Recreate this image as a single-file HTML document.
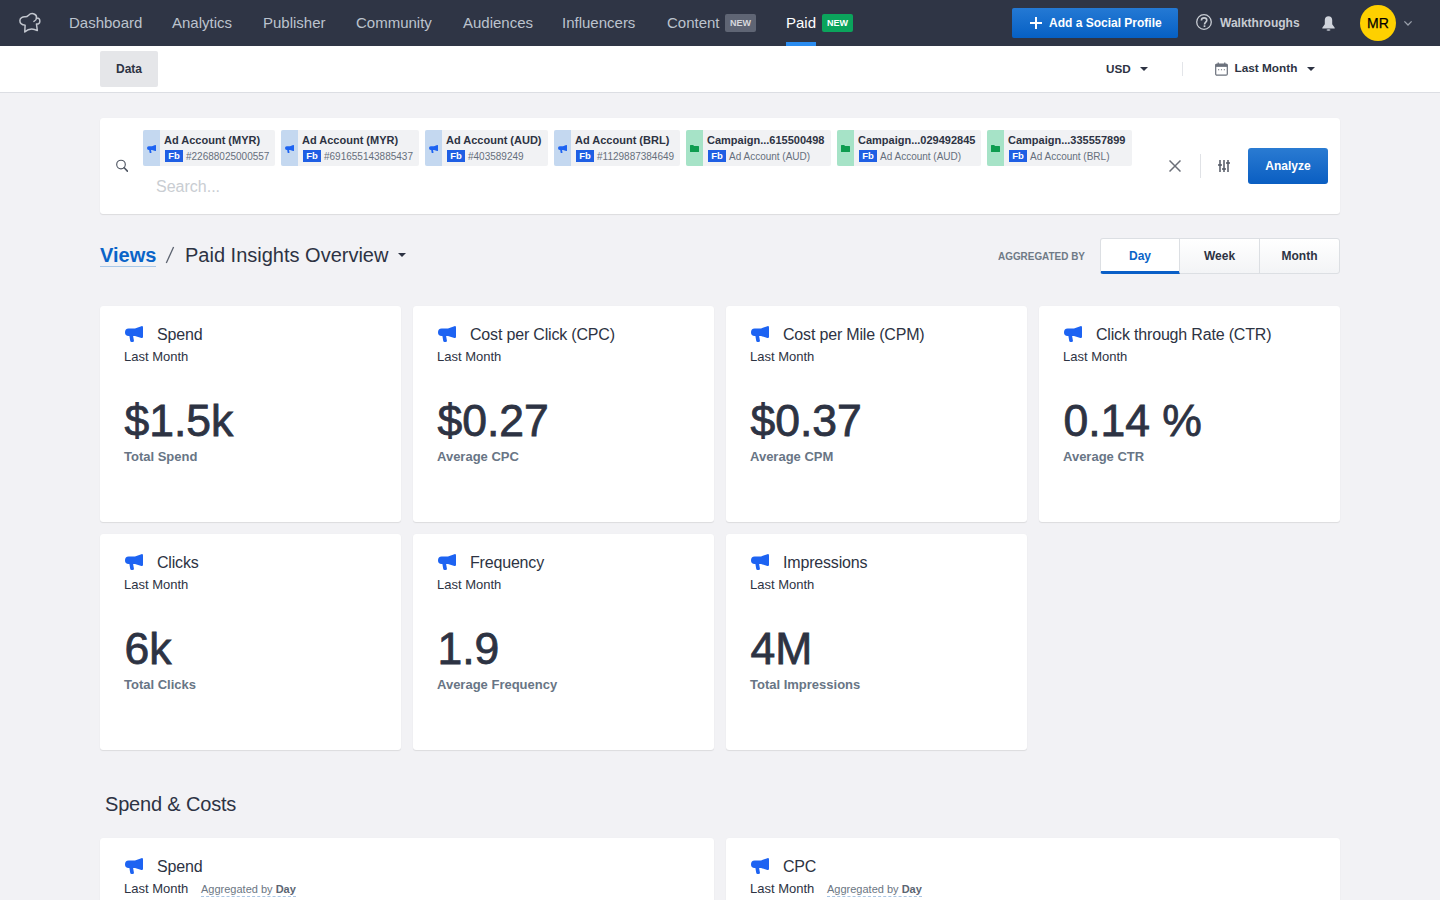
<!DOCTYPE html>
<html><head><meta charset="utf-8">
<style>
*{box-sizing:border-box;margin:0;padding:0}
html,body{-webkit-font-smoothing:antialiased;width:1440px;height:900px;overflow:hidden;background:#f2f2f5;font-family:"Liberation Sans",sans-serif;color:#2d3343}
.abs{position:absolute}
.lh1{line-height:1;white-space:nowrap}
#nav{position:absolute;left:0;top:0;width:1440px;height:46px;background:#2f3545}
.ni{position:absolute;top:0;height:46px;line-height:46px;font-size:15px;color:#bcc3ce;white-space:nowrap}
.badge{position:absolute;height:18px;line-height:19px;font-size:9px;font-weight:bold;color:#fff;text-align:center;border-radius:2px}
#sub{position:absolute;left:0;top:46px;width:1440px;height:47px;background:#fff;border-bottom:1px solid #dcdee3}
.card{position:absolute;background:#fff;border-radius:3px;box-shadow:0 1px 1px rgba(0,0,0,.09),0 0 1px rgba(0,0,0,.05)}
.chip{position:absolute;top:12px;height:36px;background:#f1f2f4;border-radius:2px;overflow:hidden}
.chip .strip{position:absolute;left:0;top:0;width:17px;height:36px}
.chip .t{position:absolute;left:21px;top:5px;font-size:11px;line-height:1;font-weight:bold;color:#2d3343;white-space:nowrap}
.chip .fb{position:absolute;left:22px;top:20px;width:18px;height:12px;background:#1f5fe4;color:#fff;font-size:9.5px;font-weight:bold;text-align:center;line-height:12px}
.chip .s{position:absolute;left:43px;top:22.3px;font-size:10px;color:#666f7c;white-space:nowrap;line-height:1}
.kpi .tt{position:absolute;left:57px;top:21.2px;font-size:16px;letter-spacing:-0.18px;line-height:1;color:#2d3343;white-space:nowrap}
.kpi .lm{position:absolute;left:24px;top:44px;font-size:13px;line-height:1;color:#2d3343;white-space:nowrap}
.kpi .v{position:absolute;left:24.4px;top:93.2px;font-size:44.5px;line-height:1;color:#2d3343;-webkit-text-stroke:0.8px #2d3343;white-space:nowrap}
.kpi .lab{position:absolute;left:24px;top:143.8px;font-size:13px;line-height:1;font-weight:bold;color:#687585;white-space:nowrap}
.kpi .agg{position:absolute;left:101px;top:46px;font-size:11px;line-height:1;color:#6b7683;white-space:nowrap;padding-bottom:1px;border-bottom:1px dashed #a9c5e3}
.kpi .agg b{color:#5b6572}
.caret{position:absolute;width:0;height:0;border-left:4px solid transparent;border-right:4px solid transparent;border-top:4.5px solid #2d3343}
.seg{position:absolute;top:238px;height:36px;border:1px solid #dcdfe3;background:linear-gradient(#ffffff,#f3f4f6);font-size:12px;font-weight:bold;text-align:center;line-height:34px;color:#2d3343}
</style></head><body>
<div id="nav">
  <svg class="abs" style="left:14px;top:8px" width="32" height="30" viewBox="-1.4 -1.3 34.8 32.6" fill="none" stroke="#c3c7cf" stroke-width="1.6" stroke-linecap="round" stroke-linejoin="round"><path d="M10.7 17.3 C7 17 5 15 5 12.5 C5 9.5 8 8 11 8.3 C12.5 8.3 13.5 7.5 14.5 6.5 C16 5 19 4.5 21 5.5 C22.5 6.3 23.3 8 23 9.5 C25.5 9.3 27 11 26.7 13.5 C26.5 15.5 25 16.3 23 16 L24 23.3 C20 21 15 20.5 10.3 24.7 Z"/><path d="M23 9.5 C23 11 22 12.5 20.3 13.3"/></svg>
  <div class="ni" style="left:69px">Dashboard</div>
  <div class="ni" style="left:172px">Analytics</div>
  <div class="ni" style="left:263px">Publisher</div>
  <div class="ni" style="left:356px">Community</div>
  <div class="ni" style="left:463px">Audiences</div>
  <div class="ni" style="left:562px">Influencers</div>
  <div class="ni" style="left:667px">Content</div>
  <div class="badge" style="left:725px;top:14px;width:31px;background:#5f6574;color:#d6d8dd">NEW</div>
  <div class="ni" style="left:786px;color:#fff">Paid</div>
  <div class="abs" style="left:786px;top:42px;width:30px;height:4px;background:#2a8cf0"></div>
  <div class="badge" style="left:822px;top:14px;width:31px;background:#0ba45c">NEW</div>
  <div class="abs" style="left:1012px;top:8px;width:166px;height:30px;background:linear-gradient(#2479d4,#0660c4);border-radius:2px;color:#fff;font-size:12px;font-weight:bold;line-height:30px;padding-left:37px;white-space:nowrap">Add a Social Profile</div>
  <svg class="abs" style="left:1030px;top:17px" width="12" height="12" viewBox="0 0 12 12" stroke="#fff" stroke-width="2"><path d="M6 0 V12 M0 6 H12"/></svg>
  <svg class="abs" style="left:1196px;top:13.8px" width="16" height="16" viewBox="0 0 16 16" fill="none" stroke="#c8ccd3" stroke-width="1.3"><circle cx="8" cy="8" r="7.3"/><path d="M5.4 6.4 C5.4 4.7 6.6 3.9 8.1 3.9 C9.8 3.9 10.8 5 10.8 6.2 C10.8 8 8.5 8.2 8.5 10.4" stroke-width="1.6"/><rect x="7.65" y="11.3" width="1.7" height="1.7" fill="#c8ccd3" stroke="none"/></svg>
  <div class="ni" style="left:1220px;font-size:12px;font-weight:bold;color:#c8ccd3">Walkthroughs</div>
  <svg class="abs" style="left:1321.5px;top:15.5px" width="13" height="15" viewBox="0 0 13 15" fill="#d0d4dc"><path d="M6.5 0.3 C4.2 0.3 2.8 1.7 2.8 4 L2.8 8.3 L0.3 11.8 L0.3 12.5 L12.7 12.5 L12.7 11.8 L10.2 8.3 L10.2 4 C10.2 1.7 8.8 0.3 6.5 0.3 Z"/><ellipse cx="6.5" cy="14" rx="2" ry="0.8"/></svg>
  <div class="abs" style="left:1360px;top:5px;width:36px;height:36px;border-radius:50%;background:#fed000;color:#000;-webkit-text-stroke:0.25px #000;font-size:14px;line-height:36px;text-align:center">MR</div>
  <svg class="abs" style="left:1403px;top:20px" width="10" height="7" viewBox="0 0 10 7" fill="none" stroke="#9aa0ab" stroke-width="1.3"><path d="M1.4 1.4 L5 5 L8.6 1.4"/></svg>
</div>
<div id="sub">
  <div class="abs" style="left:100px;top:5px;width:58px;height:36px;background:#e5e6e9;border-radius:2px;font-size:12px;font-weight:bold;line-height:37px;text-align:center;color:#2d3343">Data</div>
  <div class="abs lh1" style="left:1106px;top:17.3px;font-size:11.7px;font-weight:bold">USD</div>
  <div class="caret" style="left:1140px;top:20.5px"></div>
  <div class="abs" style="left:1182px;top:16px;width:1px;height:14px;background:#e3e5e9"></div>
  <svg class="abs" style="left:1215px;top:16px" width="13" height="14" viewBox="0 0 14 15" fill="none"><rect x="0.75" y="2.2" width="12.5" height="12" rx="1.3" stroke="#6b717c" stroke-width="1.3"/><rect x="0.75" y="2.2" width="12.5" height="3" fill="#6b717c"/><path d="M3.5 0.5 V3 M10.5 0.5 V3" stroke="#6b717c" stroke-width="1.3"/><path d="M3.3 8.3 h1.2 M6.4 8.3 h1.2 M9.5 8.3 h1.2" stroke="#6b717c" stroke-width="1.2"/></svg>
  <div class="abs lh1" style="left:1234.5px;top:17.3px;font-size:11.8px;font-weight:bold">Last Month</div>
  <div class="caret" style="left:1307px;top:20.5px"></div>
</div>
<div class="card" style="left:100px;top:118px;width:1240px;height:96px;border-radius:3px">
  <svg class="abs" style="left:15px;top:41px" width="13" height="13" viewBox="0 0 13 13" fill="none" stroke="#4f5663"><circle cx="6" cy="5.5" r="4.3" stroke-width="1.15"/><path d="M9.2 8.7 L12.4 12.1" stroke-width="1.6" stroke-linecap="round"/></svg>
<div class="chip" style="left:43px;width:132px"><div class="strip" style="background:#c4d8f0"></div><svg class="abs" style="left:4px;top:14.6px" width="9" height="8" viewBox="0 0 18 16" fill="#1d63f2"><path d="M3.6 2.4 L10 2.4 L16.4 0.2 Q18 -0.2 18 1.4 L18 10.8 Q18 12.4 16.4 12 L10 10 L8.1 10 L8.9 14.6 Q9.1 16 7.6 16 L6.6 16 Q5.4 16 5.2 14.8 L4.4 10 L3.6 10 Q0 10 0 6.2 Q0 2.4 3.6 2.4 Z"/></svg><div class="t">Ad Account (MYR)</div><div class="fb">Fb</div><div class="s">#22688025000557</div></div>
<div class="chip" style="left:181px;width:138px"><div class="strip" style="background:#c4d8f0"></div><svg class="abs" style="left:4px;top:14.6px" width="9" height="8" viewBox="0 0 18 16" fill="#1d63f2"><path d="M3.6 2.4 L10 2.4 L16.4 0.2 Q18 -0.2 18 1.4 L18 10.8 Q18 12.4 16.4 12 L10 10 L8.1 10 L8.9 14.6 Q9.1 16 7.6 16 L6.6 16 Q5.4 16 5.2 14.8 L4.4 10 L3.6 10 Q0 10 0 6.2 Q0 2.4 3.6 2.4 Z"/></svg><div class="t">Ad Account (MYR)</div><div class="fb">Fb</div><div class="s">#691655143885437</div></div>
<div class="chip" style="left:325px;width:123px"><div class="strip" style="background:#c4d8f0"></div><svg class="abs" style="left:4px;top:14.6px" width="9" height="8" viewBox="0 0 18 16" fill="#1d63f2"><path d="M3.6 2.4 L10 2.4 L16.4 0.2 Q18 -0.2 18 1.4 L18 10.8 Q18 12.4 16.4 12 L10 10 L8.1 10 L8.9 14.6 Q9.1 16 7.6 16 L6.6 16 Q5.4 16 5.2 14.8 L4.4 10 L3.6 10 Q0 10 0 6.2 Q0 2.4 3.6 2.4 Z"/></svg><div class="t">Ad Account (AUD)</div><div class="fb">Fb</div><div class="s">#403589249</div></div>
<div class="chip" style="left:454px;width:126px"><div class="strip" style="background:#c4d8f0"></div><svg class="abs" style="left:4px;top:14.6px" width="9" height="8" viewBox="0 0 18 16" fill="#1d63f2"><path d="M3.6 2.4 L10 2.4 L16.4 0.2 Q18 -0.2 18 1.4 L18 10.8 Q18 12.4 16.4 12 L10 10 L8.1 10 L8.9 14.6 Q9.1 16 7.6 16 L6.6 16 Q5.4 16 5.2 14.8 L4.4 10 L3.6 10 Q0 10 0 6.2 Q0 2.4 3.6 2.4 Z"/></svg><div class="t">Ad Account (BRL)</div><div class="fb">Fb</div><div class="s">#1129887384649</div></div>
<div class="chip" style="left:586px;width:145px"><div class="strip" style="background:#a6e3c7"></div><svg class="abs" style="left:4px;top:15px" width="9" height="7" viewBox="0 0 9 7"><path d="M0 0.6 Q0 0 0.6 0 L3.2 0 L4 1 L8.4 1 Q9 1 9 1.6 L9 6.4 Q9 7 8.4 7 L0.6 7 Q0 7 0 6.4 Z" fill="#0e9c50"/></svg><div class="t">Campaign...615500498</div><div class="fb">Fb</div><div class="s">Ad Account (AUD)</div></div>
<div class="chip" style="left:737px;width:144px"><div class="strip" style="background:#a6e3c7"></div><svg class="abs" style="left:4px;top:15px" width="9" height="7" viewBox="0 0 9 7"><path d="M0 0.6 Q0 0 0.6 0 L3.2 0 L4 1 L8.4 1 Q9 1 9 1.6 L9 6.4 Q9 7 8.4 7 L0.6 7 Q0 7 0 6.4 Z" fill="#0e9c50"/></svg><div class="t">Campaign...029492845</div><div class="fb">Fb</div><div class="s">Ad Account (AUD)</div></div>
<div class="chip" style="left:887px;width:145px"><div class="strip" style="background:#a6e3c7"></div><svg class="abs" style="left:4px;top:15px" width="9" height="7" viewBox="0 0 9 7"><path d="M0 0.6 Q0 0 0.6 0 L3.2 0 L4 1 L8.4 1 Q9 1 9 1.6 L9 6.4 Q9 7 8.4 7 L0.6 7 Q0 7 0 6.4 Z" fill="#0e9c50"/></svg><div class="t">Campaign...335557899</div><div class="fb">Fb</div><div class="s">Ad Account (BRL)</div></div>

  <div class="abs lh1" style="left:56px;top:60.8px;font-size:16px;color:#c9cdd2">Search...</div>
  <svg class="abs" style="left:1069px;top:42px" width="12" height="12" viewBox="0 0 12 12" stroke="#6b6f78" stroke-width="1.5"><path d="M0.5 0.5 L11.5 11.5 M11.5 0.5 L0.5 11.5"/></svg>
  <div class="abs" style="left:1100px;top:36px;width:1px;height:24px;background:#e0e2e6"></div>
  <svg class="abs" style="left:1118px;top:42px" width="12" height="12" viewBox="0 0 12 12" stroke="#5c626d" stroke-width="1.6"><path d="M2 0 V12 M6 0 V12 M10 0 V12"/><path d="M0.2 5 H3.8 M4.2 9 H7.8 M8.2 3 H11.8" stroke-width="2.2"/></svg>
  <div class="abs" style="left:1148px;top:30px;width:80px;height:36px;background:linear-gradient(#2a7bd2,#0a5ec2);border-radius:3px;color:#fff;font-size:12px;font-weight:bold;line-height:36px;text-align:center">Analyze</div>
</div>
<div class="abs lh1" style="left:100px;top:245px;font-size:20px;font-weight:bold;color:#0a64c8">Views</div>
<div class="abs" style="left:100px;top:266px;width:56px;height:1px;background:#a9c8e8"></div>
<svg class="abs" style="left:165px;top:246px" width="10" height="18" viewBox="0 0 10 18"><path d="M8.6 1 L1.3 17" stroke="#5c6370" stroke-width="1.3"/></svg>
<div class="abs lh1" style="left:185px;top:245px;font-size:20px;color:#2d3343">Paid Insights Overview</div>
<div class="caret" style="left:398px;top:253px;border-top-color:#2d3343"></div>
<div class="abs lh1" style="left:998px;top:252.2px;font-size:10.4px;font-weight:bold;color:#6f7a86;transform:scaleX(.955);transform-origin:0 0">AGGREGATED BY</div>
<div class="seg" style="left:1179px;width:81px;">Week</div>
<div class="seg" style="left:1259px;width:81px;border-radius:0 3px 3px 0">Month</div>
<div class="seg" style="left:1100px;width:80px;background:#fff;color:#0a64c8;border-radius:3px 0 0 3px;border-bottom:3px solid #0a5fc7;line-height:34px">Day</div>
<div class="card kpi" style="left:100px;top:306px;width:301px;height:216px"><svg class="abs" style="left:25px;top:20px" width="18" height="16" viewBox="0 0 18 16" fill="#1d63f2"><path d="M3.6 2.4 L10 2.4 L16.4 0.2 Q18 -0.2 18 1.4 L18 10.8 Q18 12.4 16.4 12 L10 10 L8.1 10 L8.9 14.6 Q9.1 16 7.6 16 L6.6 16 Q5.4 16 5.2 14.8 L4.4 10 L3.6 10 Q0 10 0 6.2 Q0 2.4 3.6 2.4 Z"/></svg><div class="tt">Spend</div><div class="lm">Last Month</div><div class="v">$1.5k</div><div class="lab">Total Spend</div></div>
<div class="card kpi" style="left:413px;top:306px;width:301px;height:216px"><svg class="abs" style="left:25px;top:20px" width="18" height="16" viewBox="0 0 18 16" fill="#1d63f2"><path d="M3.6 2.4 L10 2.4 L16.4 0.2 Q18 -0.2 18 1.4 L18 10.8 Q18 12.4 16.4 12 L10 10 L8.1 10 L8.9 14.6 Q9.1 16 7.6 16 L6.6 16 Q5.4 16 5.2 14.8 L4.4 10 L3.6 10 Q0 10 0 6.2 Q0 2.4 3.6 2.4 Z"/></svg><div class="tt">Cost per Click (CPC)</div><div class="lm">Last Month</div><div class="v">$0.27</div><div class="lab">Average CPC</div></div>
<div class="card kpi" style="left:726px;top:306px;width:301px;height:216px"><svg class="abs" style="left:25px;top:20px" width="18" height="16" viewBox="0 0 18 16" fill="#1d63f2"><path d="M3.6 2.4 L10 2.4 L16.4 0.2 Q18 -0.2 18 1.4 L18 10.8 Q18 12.4 16.4 12 L10 10 L8.1 10 L8.9 14.6 Q9.1 16 7.6 16 L6.6 16 Q5.4 16 5.2 14.8 L4.4 10 L3.6 10 Q0 10 0 6.2 Q0 2.4 3.6 2.4 Z"/></svg><div class="tt">Cost per Mile (CPM)</div><div class="lm">Last Month</div><div class="v">$0.37</div><div class="lab">Average CPM</div></div>
<div class="card kpi" style="left:1039px;top:306px;width:301px;height:216px"><svg class="abs" style="left:25px;top:20px" width="18" height="16" viewBox="0 0 18 16" fill="#1d63f2"><path d="M3.6 2.4 L10 2.4 L16.4 0.2 Q18 -0.2 18 1.4 L18 10.8 Q18 12.4 16.4 12 L10 10 L8.1 10 L8.9 14.6 Q9.1 16 7.6 16 L6.6 16 Q5.4 16 5.2 14.8 L4.4 10 L3.6 10 Q0 10 0 6.2 Q0 2.4 3.6 2.4 Z"/></svg><div class="tt">Click through Rate (CTR)</div><div class="lm">Last Month</div><div class="v">0.14 %</div><div class="lab">Average CTR</div></div>
<div class="card kpi" style="left:100px;top:534px;width:301px;height:216px"><svg class="abs" style="left:25px;top:20px" width="18" height="16" viewBox="0 0 18 16" fill="#1d63f2"><path d="M3.6 2.4 L10 2.4 L16.4 0.2 Q18 -0.2 18 1.4 L18 10.8 Q18 12.4 16.4 12 L10 10 L8.1 10 L8.9 14.6 Q9.1 16 7.6 16 L6.6 16 Q5.4 16 5.2 14.8 L4.4 10 L3.6 10 Q0 10 0 6.2 Q0 2.4 3.6 2.4 Z"/></svg><div class="tt">Clicks</div><div class="lm">Last Month</div><div class="v">6k</div><div class="lab">Total Clicks</div></div>
<div class="card kpi" style="left:413px;top:534px;width:301px;height:216px"><svg class="abs" style="left:25px;top:20px" width="18" height="16" viewBox="0 0 18 16" fill="#1d63f2"><path d="M3.6 2.4 L10 2.4 L16.4 0.2 Q18 -0.2 18 1.4 L18 10.8 Q18 12.4 16.4 12 L10 10 L8.1 10 L8.9 14.6 Q9.1 16 7.6 16 L6.6 16 Q5.4 16 5.2 14.8 L4.4 10 L3.6 10 Q0 10 0 6.2 Q0 2.4 3.6 2.4 Z"/></svg><div class="tt">Frequency</div><div class="lm">Last Month</div><div class="v">1.9</div><div class="lab">Average Frequency</div></div>
<div class="card kpi" style="left:726px;top:534px;width:301px;height:216px"><svg class="abs" style="left:25px;top:20px" width="18" height="16" viewBox="0 0 18 16" fill="#1d63f2"><path d="M3.6 2.4 L10 2.4 L16.4 0.2 Q18 -0.2 18 1.4 L18 10.8 Q18 12.4 16.4 12 L10 10 L8.1 10 L8.9 14.6 Q9.1 16 7.6 16 L6.6 16 Q5.4 16 5.2 14.8 L4.4 10 L3.6 10 Q0 10 0 6.2 Q0 2.4 3.6 2.4 Z"/></svg><div class="tt">Impressions</div><div class="lm">Last Month</div><div class="v">4M</div><div class="lab">Total Impressions</div></div>

<div class="abs lh1" style="left:105px;top:793.9px;font-size:20px;letter-spacing:-0.17px;color:#2d3343">Spend &amp; Costs</div>
<div class="card kpi" style="left:100px;top:838px;width:614px;height:120px"><svg class="abs" style="left:25px;top:20px" width="18" height="16" viewBox="0 0 18 16" fill="#1d63f2"><path d="M3.6 2.4 L10 2.4 L16.4 0.2 Q18 -0.2 18 1.4 L18 10.8 Q18 12.4 16.4 12 L10 10 L8.1 10 L8.9 14.6 Q9.1 16 7.6 16 L6.6 16 Q5.4 16 5.2 14.8 L4.4 10 L3.6 10 Q0 10 0 6.2 Q0 2.4 3.6 2.4 Z"/></svg><div class="tt">Spend</div><div class="lm">Last Month</div><div class="agg">Aggregated by <b>Day</b></div></div>
<div class="card kpi" style="left:726px;top:838px;width:614px;height:120px"><svg class="abs" style="left:25px;top:20px" width="18" height="16" viewBox="0 0 18 16" fill="#1d63f2"><path d="M3.6 2.4 L10 2.4 L16.4 0.2 Q18 -0.2 18 1.4 L18 10.8 Q18 12.4 16.4 12 L10 10 L8.1 10 L8.9 14.6 Q9.1 16 7.6 16 L6.6 16 Q5.4 16 5.2 14.8 L4.4 10 L3.6 10 Q0 10 0 6.2 Q0 2.4 3.6 2.4 Z"/></svg><div class="tt">CPC</div><div class="lm">Last Month</div><div class="agg">Aggregated by <b>Day</b></div></div>

</body></html>
